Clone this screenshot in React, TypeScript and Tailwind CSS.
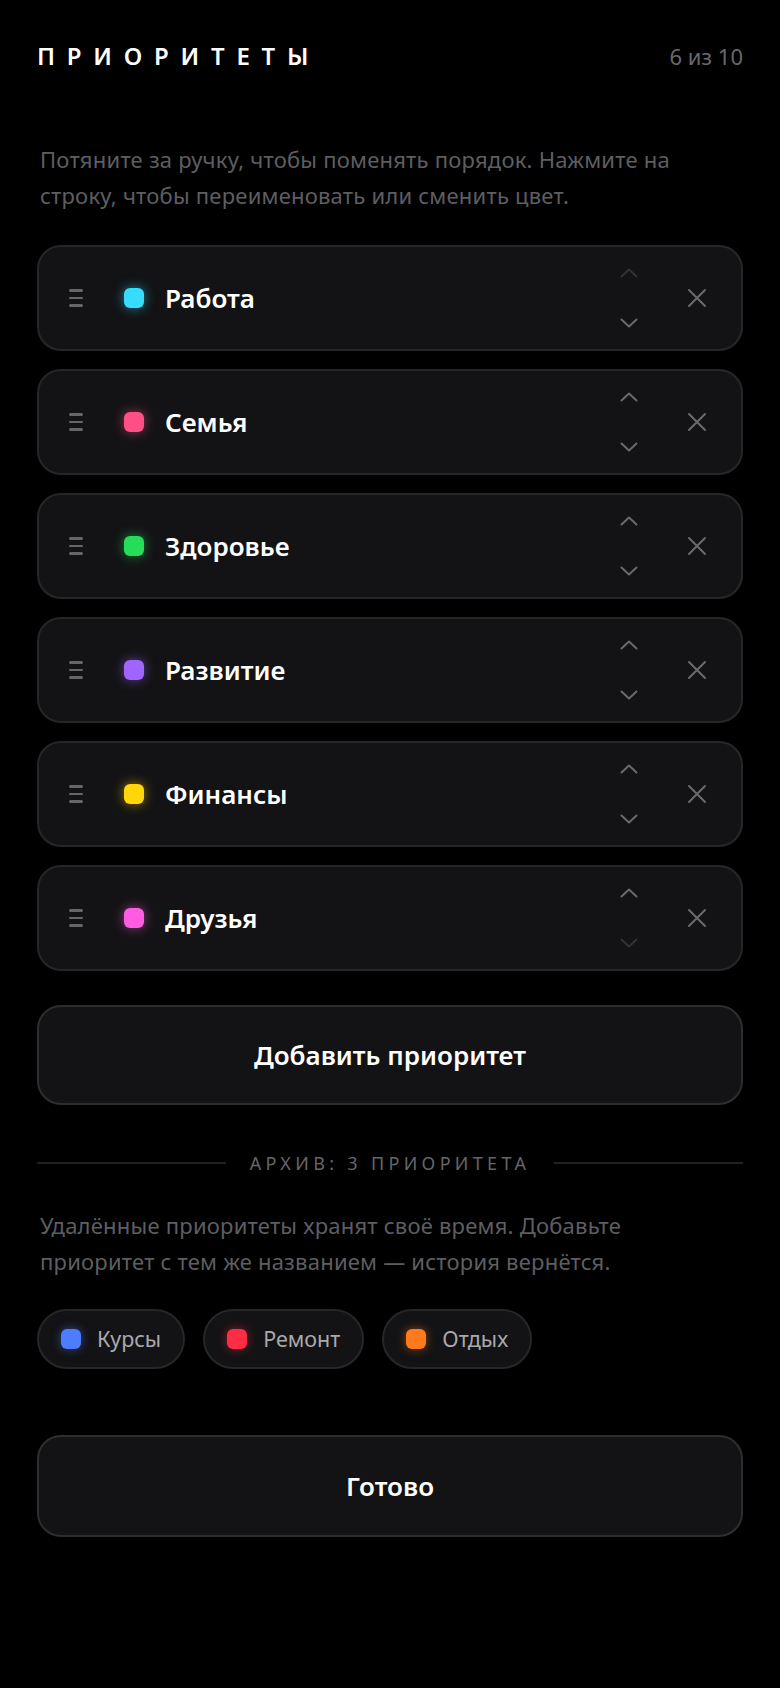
const priorities = [
  { name: "Работа", dot: "bg-[#35dcfb] shadow-[0_0_12px_rgba(53,220,251,0.55)]", first: true },
  { name: "Семья", dot: "bg-[#ff4f86] shadow-[0_0_12px_rgba(255,79,134,0.55)]" },
  { name: "Здоровье", dot: "bg-[#25dd58] shadow-[0_0_12px_rgba(37,221,88,0.55)]" },
  { name: "Развитие", dot: "bg-[#a064ff] shadow-[0_0_12px_rgba(160,100,255,0.55)]" },
  { name: "Финансы", dot: "bg-[#ffd60a] shadow-[0_0_12px_rgba(255,214,10,0.55)]" },
  { name: "Друзья", dot: "bg-[#ff5ce1] shadow-[0_0_12px_rgba(255,92,225,0.55)]", last: true },
];

const archived = [
  { name: "Курсы", dot: "bg-[#4d7cff] shadow-[0_0_10px_rgba(77,124,255,0.5)]" },
  { name: "Ремонт", dot: "bg-[#ff2d43] shadow-[0_0_10px_rgba(255,45,67,0.5)]" },
  { name: "Отдых", dot: "bg-[#ff7a1c] shadow-[0_0_10px_rgba(255,122,28,0.5)]" },
];

function Chevron({ up, dim }: { up?: boolean; dim?: boolean }) {
  return (
    <svg
      width="18"
      height="10"
      viewBox="0 0 18 10"
      fill="none"
      className={dim ? "text-[#323235]" : "text-[#6a6a6e]"}
    >
      <polyline
        points={up ? "1.5,8.5 9,1.5 16.5,8.5" : "1.5,1.5 9,8.5 16.5,1.5"}
        stroke="currentColor"
        strokeWidth="2"
        strokeLinecap="round"
        strokeLinejoin="round"
      />
    </svg>
  );
}

function Row({ name, dot, first, last }: { name: string; dot: string; first?: boolean; last?: boolean }) {
  return (
    <div className="flex h-[106px] items-center rounded-[24px] border-2 border-[#27272a] bg-[#131315] pl-[30px] pr-[34px]">
      <div className="flex w-[14px] flex-col gap-[5px]">
        <span className="h-[2.5px] rounded-full bg-[#66666a]"></span>
        <span className="h-[2.5px] rounded-full bg-[#66666a]"></span>
        <span className="h-[2.5px] rounded-full bg-[#66666a]"></span>
      </div>
      <span className={`ml-[41px] h-[20px] w-[20px] rounded-[6px] ${dot}`}></span>
      <span className="ml-[21px] flex-1 text-[26px] font-semibold text-white">{name}</span>
      <div className="flex flex-col items-center gap-[40px]">
        <Chevron up dim={first} />
        <Chevron dim={last} />
      </div>
      <svg width="20" height="20" viewBox="0 0 20 20" className="ml-[49px] text-[#6a6a6e]">
        <path d="M2 2 18 18M18 2 2 18" stroke="currentColor" strokeWidth="2" strokeLinecap="round" />
      </svg>
    </div>
  );
}

export default function App() {
  return (
    <div className="min-h-screen bg-black px-[37px] pt-[41px] font-['Noto_Sans',sans-serif]">
      <div className="flex items-center justify-between">
        <h1 className="text-[24px] font-semibold leading-[30px] tracking-[0.49em] text-white">ПРИОРИТЕТЫ</h1>
        <span className="text-[22px] leading-[30px] text-[#68686c]">6 из 10</span>
      </div>

      <p className="mt-[70px] pl-[3px] text-[22px] leading-[36px] tracking-[0.01em] text-[#5e5e62]">
        Потяните за ручку, чтобы поменять порядок. Нажмите на
        <br />
        строку, чтобы переименовать или сменить цвет.
      </p>

      <div className="mt-[32px] flex flex-col gap-[18px]">
        {priorities.map((p) => (
          <Row key={p.name} {...p} />
        ))}
      </div>

      <button className="mt-[34px] flex h-[100px] w-full items-center justify-center rounded-[24px] border-2 border-[#2e2e31] bg-[#131315] text-[26px] font-semibold text-white">
        Добавить приоритет
      </button>

      <div className="mt-[46px] flex items-center gap-[24px]">
        <div className="h-[2px] flex-1 bg-[#222224]"></div>
        <span className="text-[18px] leading-[24px] tracking-[0.24em] text-[#66666a]">АРХИВ: 3 ПРИОРИТЕТА</span>
        <div className="h-[2px] flex-1 bg-[#222224]"></div>
      </div>

      <p className="mt-[32px] pl-[3px] text-[22px] leading-[36px] tracking-[0.01em] text-[#5e5e62]">
        Удалённые приоритеты хранят своё время. Добавьте
        <br />
        приоритет с тем же названием — история вернётся.
      </p>

      <div className="mt-[30px] flex gap-[18px]">
        {archived.map((a) => (
          <div
            key={a.name}
            className="flex h-[60px] items-center gap-[16px] rounded-full border-2 border-[#27272a] bg-[#131315] pl-[22px] pr-[22px]"
          >
            <span className={`h-[20px] w-[20px] rounded-[6px] ${a.dot}`}></span>
            <span className="text-[21.5px] text-[#a9a9ad]">{a.name}</span>
          </div>
        ))}
      </div>

      <button className="mt-[66px] flex h-[102px] w-full items-center justify-center rounded-[24px] border-2 border-[#2e2e31] bg-[#131315] text-[26px] font-semibold text-white">
        Готово
      </button>
    </div>
  );
}
